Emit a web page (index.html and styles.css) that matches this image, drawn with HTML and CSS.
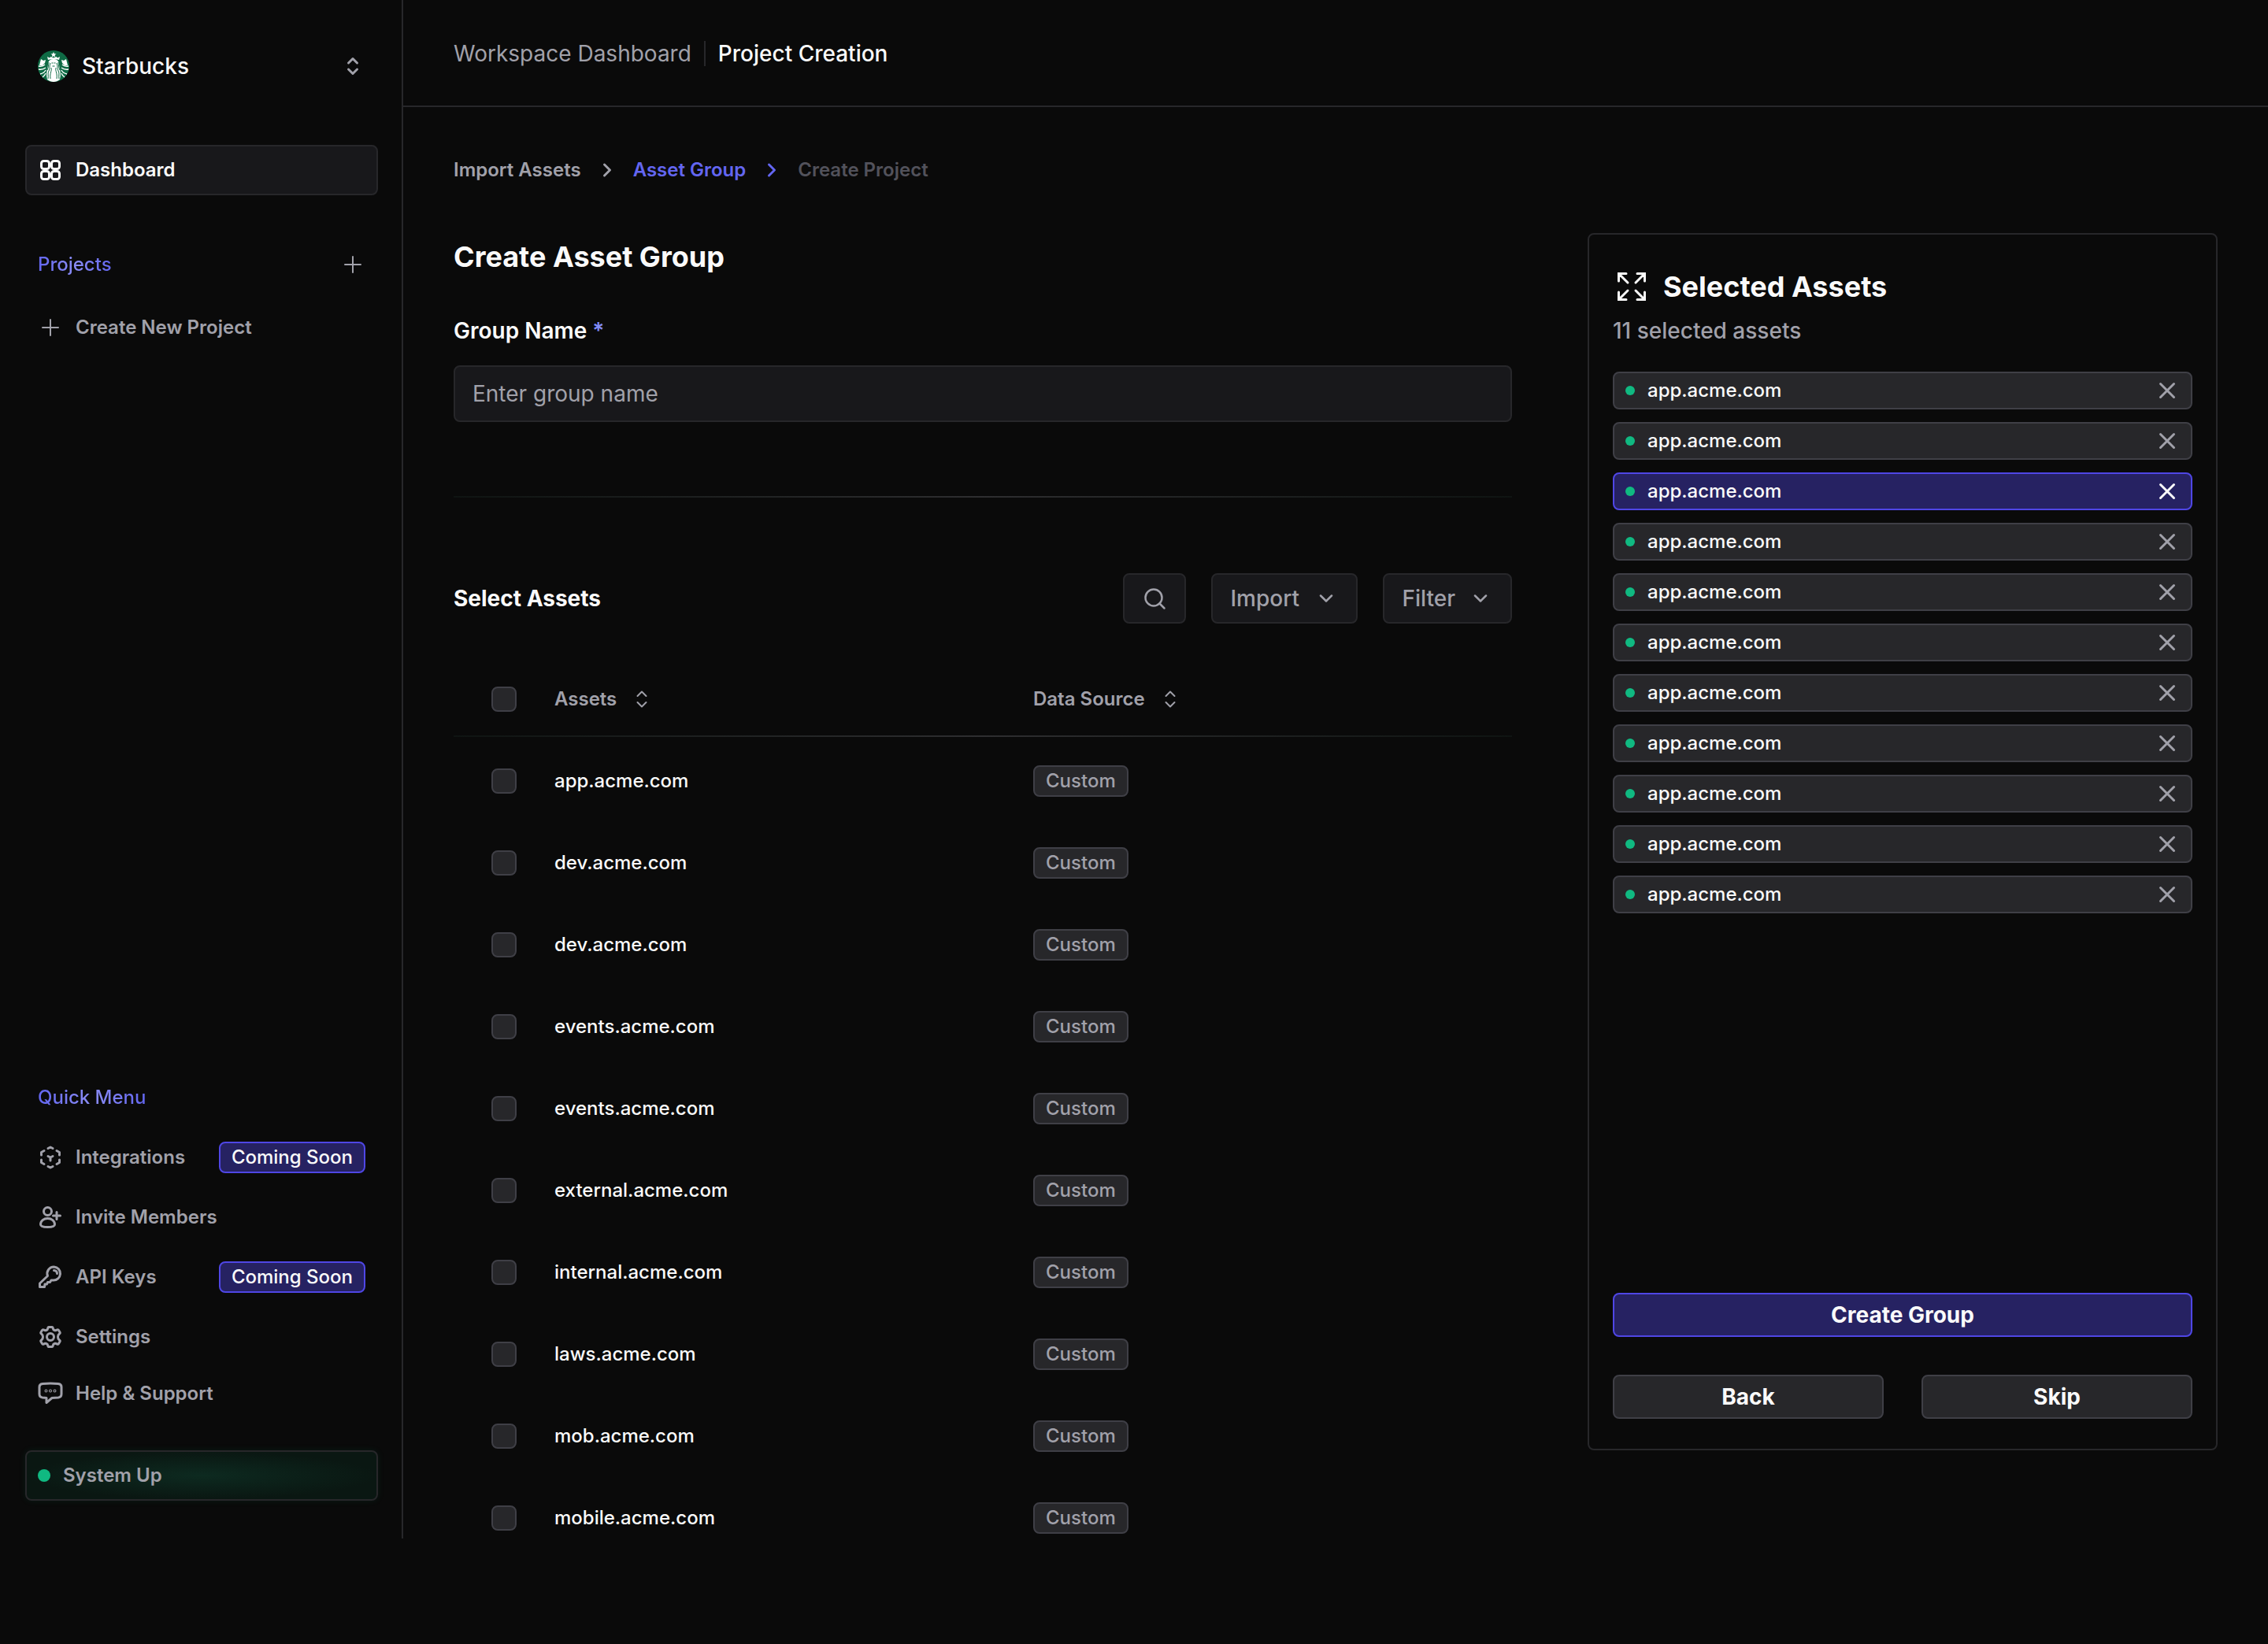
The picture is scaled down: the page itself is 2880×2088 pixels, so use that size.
FILE: index.html
```
<!DOCTYPE html>
<html lang="en">

<head>
    <meta charset="UTF-8">
    <meta name="viewport" content="width=device-width, initial-scale=1.0">
    <title>Project Creation</title>
    <link rel="stylesheet" href="styles.css">
</head>

<body>
    <svg class="sprite" aria-hidden="true">
        <symbol id="icon-sort" viewBox="0 0 32 32">
            <path d="M10.500 12l5.500-5.500 5.500 5.500M10.500 20l5.500 5.500 5.500-5.500" />
        </symbol>
        <symbol id="icon-plus" viewBox="0 0 32 32">
            <path d="M16 6v20M6 16h20" />
        </symbol>
        <symbol id="icon-chevron-right" viewBox="0 0 32 32">
            <path d="M12.500 9l7 7-7 7" />
        </symbol>
        <symbol id="icon-chevron-down" viewBox="0 0 32 32">
            <path d="M9 12.500l7 7 7-7" />
        </symbol>
        <symbol id="icon-close" viewBox="0 0 32 32">
            <path d="M7.500 7.500l17 17M24.500 7.500l-17 17" />
        </symbol>
    </svg>

    <div class="layout">
        <aside class="sidebar">
            <button type="button" class="workspace">
                <svg class="logo" viewBox="0 0 40 40" aria-hidden="true">
                    <circle cx="20" cy="20" r="20" fill="#0f6b45" />
                    <path fill="#fff" d="M20 2l1 2.300 2.500.2-1.900 1.600.6 2.400-2.200-1.300-2.200 1.300.6-2.400-1.900-1.600 2.500-.2zM12 8l3 1.500 1.500-1.500 3.500 1.500L23.500 8 25 9.500 28 8l-1 4q-7-2-14 0zM4 11l3 2 3-1-1 4-3 3-4 0zM36 11l-3 2-3-1 1 4 3 3 4 0zM20 11c5 0 7 3 7 7 1 7 3 11 1 19-5 4-11 4-16 0-2-8 0-12 1-19 0-4 2-7 7-7z" />
                    <path fill="none" stroke="#fff" stroke-width="1.300" d="M1 20q5 1 8-2M1 24q5 1 9-2M3 30q5-1 7-5M6 34q3-2 4-5M39 20q-5 1-8-2M39 24q-5 1-9-2M37 30q-5-1-7-5M34 34q-3-2-4-5" />
                    <path fill="none" stroke="#0f6b45" stroke-width="1" d="M16 16c-2 5 0 6-2 10s0 6-1 10M14 15c-1 4 0 6-2 10M24 16c2 5 0 6 2 10s0 6 1 10M26 15c1 4 0 6 2 10M17 22c1 5-2 6-1 14M23 22c-1 5 2 6 1 14M17.500 16h2M20.500 16h2M18.500 20h3" />
                </svg>
                <span class="workspace-name">Starbucks</span>
                <svg class="icon icon-bold"><use href="#icon-sort" /></svg>
            </button>

            <nav class="nav">
                <a href="#" class="nav-link active">
                    <svg class="icon icon-bold" viewBox="0 0 32 32">
                        <rect x="4.500" y="4.500" width="10" height="10" rx="3" />
                        <rect x="17.500" y="4.500" width="10" height="10" rx="3" />
                        <rect x="4.500" y="17.500" width="10" height="10" rx="3" />
                        <rect x="17.500" y="17.500" width="10" height="10" rx="3" />
                    </svg>
                    Dashboard
                </a>
            </nav>

            <div class="section-title">
                <h2 class="gradient-text">Projects</h2>
                <button type="button" class="icon-btn" aria-label="Add project">
                    <svg class="icon"><use href="#icon-plus" /></svg>
                </button>
            </div>
            <a href="#" class="menu-link">
                <svg class="icon"><use href="#icon-plus" /></svg>
                Create New Project
            </a>

            <nav class="quick-menu">
                <h2 class="gradient-text">Quick Menu</h2>
                <a href="#" class="menu-link">
                    <svg class="icon icon-bold" viewBox="0 0 32 32">
                        <path d="M13 4.500l3-1.500 3 1.500M24 7.500l3.500 2v3.500M27.500 19v3.500l-3.500 2M19 27.500l-3 1.500-3-1.500M8 24.500l-3.500-2V19M4.500 13V9.500l3.500-2M16 20v-4M16 16l-3-1.500M16 16l3-1.500" />
                    </svg>
                    Integrations
                    <span class="badge badge-primary">Coming Soon</span>
                </a>
                <a href="#" class="menu-link">
                    <svg class="icon icon-bold" viewBox="0 0 32 32">
                        <circle cx="12.500" cy="8.500" r="5" />
                        <path d="M12.500 17.500c5 0 9 3 9 7.500 0 2.500-4 3.500-9 3.500s-9-1-9-3.500c0-4.500 4-7.500 9-7.500zM24 9.500v9M19.500 14h9" />
                    </svg>
                    Invite Members
                </a>
                <a href="#" class="menu-link">
                    <svg class="icon icon-bold" viewBox="0 0 32 32">
                        <path d="M20.500 3a8.500 8.500 0 1 1-1 17l-2.500 0-1.500 2.500h-3l-1 2.500H9l-.5 3.500H2.500v-4.500L12.500 14.500A8.500 8.500 0 0 1 20.500 3z" />
                        <path d="M20.500 7.500a4 4 0 0 1 4 4" />
                    </svg>
                    API Keys
                    <span class="badge badge-primary">Coming Soon</span>
                </a>
                <a href="#" class="menu-link">
                    <svg class="icon icon-bold" viewBox="0 0 32 32">
                        <path d="M14 3.500h4q1 0 1.200 1.500 .3 2 2 2.500t3-.5q1.500-.8 2.300.5l1.500 2.500q.7 1.200-.8 2.200-1.700 1.300-1.700 3.800t1.700 3.800q1.500 1 .8 2.200l-1.500 2.500q-.8 1.300-2.300.5-1.300-1-3-.5t-2 2.500q-.2 1.500-1.200 1.500h-4q-1 0-1.200-1.500-.3-2-2-2.500t-3 .5q-1.500.8-2.300-.5L4 22q-.7-1.200.8-2.200 1.700-1.300 1.700-3.800t-1.700-3.800Q3.300 11.200 4 10l1.500-2.500q.8-1.300 2.300-.5 1.300 1 3 .5t2-2.500Q13 3.500 14 3.500z" />
                        <circle cx="16" cy="16" r="4.500" />
                    </svg>
                    Settings
                </a>
                <a href="#" class="menu-link">
                    <svg class="icon icon-bold" viewBox="0 0 32 32">
                        <path d="M6 3.500q10-1 20 0 4 .5 4 4v9q0 4-4 4.500l-8 .5-7 6v-6l-5-.5q-4-.5-4-4.500v-9q0-3.500 4-4z" />
                        <circle cx="10.500" cy="12.500" r="0.500" />
                        <circle cx="16" cy="12.500" r="0.500" />
                        <circle cx="21.500" cy="12.500" r="0.500" />
                    </svg>
                    Help &amp; Support
                </a>
            </nav>

            <div class="status">
                <span class="status-dot"></span>
                System Up
            </div>
        </aside>

        <div class="page">
            <header class="topbar">
                <a href="#">Workspace Dashboard</a>
                <span class="topbar-current">Project Creation</span>
            </header>

            <div class="content">
                <nav class="breadcrumb" aria-label="Steps">
                    <a href="#">Import Assets</a>
                    <svg class="icon"><use href="#icon-chevron-right" /></svg>
                    <a href="#" class="current">Asset Group</a>
                    <svg class="icon current"><use href="#icon-chevron-right" /></svg>
                    <span class="disabled">Create Project</span>
                </nav>

                <div class="columns">
                    <main class="main">
                        <h1>Create Asset Group</h1>

                        <div class="form-group">
                            <label for="group-name">Group Name <span class="required">*</span></label>
                            <input type="text" id="group-name" name="group-name" placeholder="Enter group name">
                        </div>

                        <div class="divider"></div>

                        <div class="toolbar">
                            <h2>Select Assets</h2>
                            <button type="button" class="tool-btn" aria-label="Search">
                                <svg class="icon" viewBox="0 0 32 32">
                                    <circle cx="15" cy="15" r="10.500" />
                                    <path d="M22.500 22.500l6 6" />
                                </svg>
                            </button>
                            <button type="button" class="tool-btn tool-btn-wide">Import <svg class="icon"><use href="#icon-chevron-down" /></svg></button>
                            <button type="button" class="tool-btn">Filter <svg class="icon"><use href="#icon-chevron-down" /></svg></button>
                        </div>

                        <table class="assets">
                            <thead>
                                <tr>
                                    <th class="check"><input type="checkbox" aria-label="Select all"></th>
                                    <th><span class="sortable">Assets <svg class="icon"><use href="#icon-sort" /></svg></span></th>
                                    <th><span class="sortable">Data Source <svg class="icon"><use href="#icon-sort" /></svg></span></th>
                                </tr>
                            </thead>
                            <tbody>
                                <tr>
                                    <td class="check"><input type="checkbox" id="asset-1"></td>
                                    <td><label for="asset-1">app.acme.com</label></td>
                                    <td><span class="badge">Custom</span></td>
                                </tr>
                                <tr>
                                    <td class="check"><input type="checkbox" id="asset-2"></td>
                                    <td><label for="asset-2">dev.acme.com</label></td>
                                    <td><span class="badge">Custom</span></td>
                                </tr>
                                <tr>
                                    <td class="check"><input type="checkbox" id="asset-3"></td>
                                    <td><label for="asset-3">dev.acme.com</label></td>
                                    <td><span class="badge">Custom</span></td>
                                </tr>
                                <tr>
                                    <td class="check"><input type="checkbox" id="asset-4"></td>
                                    <td><label for="asset-4">events.acme.com</label></td>
                                    <td><span class="badge">Custom</span></td>
                                </tr>
                                <tr>
                                    <td class="check"><input type="checkbox" id="asset-5"></td>
                                    <td><label for="asset-5">events.acme.com</label></td>
                                    <td><span class="badge">Custom</span></td>
                                </tr>
                                <tr>
                                    <td class="check"><input type="checkbox" id="asset-6"></td>
                                    <td><label for="asset-6">external.acme.com</label></td>
                                    <td><span class="badge">Custom</span></td>
                                </tr>
                                <tr>
                                    <td class="check"><input type="checkbox" id="asset-7"></td>
                                    <td><label for="asset-7">internal.acme.com</label></td>
                                    <td><span class="badge">Custom</span></td>
                                </tr>
                                <tr>
                                    <td class="check"><input type="checkbox" id="asset-8"></td>
                                    <td><label for="asset-8">laws.acme.com</label></td>
                                    <td><span class="badge">Custom</span></td>
                                </tr>
                                <tr>
                                    <td class="check"><input type="checkbox" id="asset-9"></td>
                                    <td><label for="asset-9">mob.acme.com</label></td>
                                    <td><span class="badge">Custom</span></td>
                                </tr>
                                <tr>
                                    <td class="check"><input type="checkbox" id="asset-10"></td>
                                    <td><label for="asset-10">mobile.acme.com</label></td>
                                    <td><span class="badge">Custom</span></td>
                                </tr>
                            </tbody>
                        </table>
                    </main>

                    <section class="panel">
                        <div class="panel-title">
                            <svg class="icon-expand" viewBox="0 0 48 48" aria-hidden="true">
                                <path d="M7.500 17v-9.500h9.500M8 8l11 11M31 7.500h9.500V17M40 8L29 19M7.500 31v9.500h9.500M8 40l11-11M31 40.500h9.500V31M40 40L29 29" />
                            </svg>
                            <h2>Selected Assets</h2>
                        </div>
                        <p>11 selected assets</p>

                        <ul class="selected">
                            <li>app.acme.com <button type="button" class="icon-btn" aria-label="Remove"><svg class="icon icon-bold"><use href="#icon-close" /></svg></button></li>
                            <li>app.acme.com <button type="button" class="icon-btn" aria-label="Remove"><svg class="icon icon-bold"><use href="#icon-close" /></svg></button></li>
                            <li class="highlight">app.acme.com <button type="button" class="icon-btn" aria-label="Remove"><svg class="icon icon-bold"><use href="#icon-close" /></svg></button></li>
                            <li>app.acme.com <button type="button" class="icon-btn" aria-label="Remove"><svg class="icon icon-bold"><use href="#icon-close" /></svg></button></li>
                            <li>app.acme.com <button type="button" class="icon-btn" aria-label="Remove"><svg class="icon icon-bold"><use href="#icon-close" /></svg></button></li>
                            <li>app.acme.com <button type="button" class="icon-btn" aria-label="Remove"><svg class="icon icon-bold"><use href="#icon-close" /></svg></button></li>
                            <li>app.acme.com <button type="button" class="icon-btn" aria-label="Remove"><svg class="icon icon-bold"><use href="#icon-close" /></svg></button></li>
                            <li>app.acme.com <button type="button" class="icon-btn" aria-label="Remove"><svg class="icon icon-bold"><use href="#icon-close" /></svg></button></li>
                            <li>app.acme.com <button type="button" class="icon-btn" aria-label="Remove"><svg class="icon icon-bold"><use href="#icon-close" /></svg></button></li>
                            <li>app.acme.com <button type="button" class="icon-btn" aria-label="Remove"><svg class="icon icon-bold"><use href="#icon-close" /></svg></button></li>
                            <li>app.acme.com <button type="button" class="icon-btn" aria-label="Remove"><svg class="icon icon-bold"><use href="#icon-close" /></svg></button></li>
                        </ul>

                        <div class="actions">
                            <button type="submit" class="btn btn-primary">Create Group</button>
                            <button type="button" class="btn">Back</button>
                            <button type="button" class="btn">Skip</button>
                        </div>
                    </section>
                </div>
            </div>
        </div>
    </div>
</body>

</html>
```
FILE: styles.css
```
* {
    box-sizing: border-box;
}

body {
    margin: 0;
    background-color: #0a0a0a;
    color: #fafafa;
    font-family: Inter, "Liberation Sans", sans-serif;
    font-size: 24px;
    line-height: 32px;
}

h1,
h2,
p,
ul {
    margin: 0;
    padding: 0;
}

a {
    color: inherit;
    text-decoration: none;
}

button,
input {
    font: inherit;
    color: inherit;
}

button {
    padding: 0;
    border: none;
    background: none;
    cursor: pointer;
}

.sprite {
    display: none;
}

.icon {
    width: 32px;
    height: 32px;
    flex: none;
    fill: none;
    stroke: currentColor;
    stroke-width: 2;
    stroke-linecap: round;
    stroke-linejoin: round;
}

.icon-bold {
    stroke-width: 3;
}

.icon-btn {
    display: flex;
    color: #a1a1aa;
}

.layout {
    display: flex;
    align-items: flex-start;
}

/* Sidebar */
.sidebar {
    display: flex;
    flex-direction: column;
    flex: none;
    width: 512px;
    min-height: calc(100vh - 134px);
    padding: 64px 30px 48px 32px;
    border-right: 2px solid #27272a;
    color: #a1a1aa;
}

.workspace {
    display: flex;
    align-items: center;
    height: 40px;
    gap: 16px;
    padding: 0 16px;
    color: #a1a1aa;
    font-size: 28px;
}

.logo {
    width: 40px;
    height: 40px;
}

.workspace-name {
    flex: 1;
    text-align: left;
    color: #fafafa;
    font-weight: 500;
}

.nav {
    margin-top: 80px;
}

.nav-link {
    display: flex;
    align-items: center;
    gap: 16px;
    height: 64px;
    padding: 0 14px;
    border: 2px solid #27272a;
    border-radius: 8px;
    background-color: #18181b;
    color: #fafafa;
    font-weight: 600;
}

.section-title {
    display: flex;
    align-items: center;
    justify-content: space-between;
    margin: 72px 16px 48px;
}

.gradient-text {
    align-self: flex-start;
    background: linear-gradient(90deg, #6366f1, #8b8df5, #6366f1);
    background-clip: text;
    -webkit-background-clip: text;
    color: transparent;
    font-size: 24px;
    font-weight: 500;
}

.menu-link {
    display: flex;
    align-items: center;
    gap: 16px;
    font-weight: 600;
}

.sidebar > .menu-link {
    margin: 0 16px;
}

.quick-menu {
    display: flex;
    flex-direction: column;
    gap: 40px;
    margin: auto 16px 56px;
}

.badge {
    display: inline-block;
    padding: 2px 14px;
    border: 2px solid #3f3f46;
    border-radius: 8px;
    background-color: #27272a;
    color: #a1a1aa;
    font-weight: 500;
}

.badge-primary {
    margin-left: auto;
    border-color: #4f46e5;
    background-color: #262262;
    color: #fafafa;
}

.status {
    display: flex;
    align-items: center;
    gap: 16px;
    height: 64px;
    padding: 0 14px;
    border: 2px solid #27272a;
    border-radius: 8px;
    background: radial-gradient(closest-side, #0d2a20, #0a1712);
    box-shadow: 0 0 8px rgba(16, 185, 129, 0.1);
    font-weight: 600;
}

.status-dot {
    width: 16px;
    height: 16px;
    border-radius: 50%;
    background-color: #10b981;
}

/* Page */
.page {
    flex: 1;
    min-width: 0;
}

.topbar {
    display: flex;
    align-items: center;
    gap: 16px;
    height: 136px;
    padding: 2px 64px 0;
    border-bottom: 2px solid #27272a;
    color: #a1a1aa;
    font-size: 28px;
}

.topbar-current {
    padding-left: 16px;
    border-left: 2px solid #27272a;
    color: #fafafa;
    font-weight: 500;
}

.content {
    padding: 64px;
}

.breadcrumb {
    display: flex;
    align-items: center;
    gap: 17px;
    color: #a1a1aa;
    font-weight: 600;
}

.breadcrumb .icon {
    stroke-width: 3;
}

.breadcrumb .current {
    color: #6366f1;
}

.breadcrumb .disabled {
    color: #52525b;
}

.columns {
    display: flex;
    align-items: flex-start;
    gap: 96px;
    margin-top: 64px;
}

.main {
    flex: 1;
    min-width: 0;
}

h1,
.panel-title h2 {
    font-size: 36px;
    line-height: 48px;
    font-weight: 700;
}

.main h1 {
    margin-top: 6px;
}

.form-group {
    margin-top: 54px;
}

.form-group label {
    display: block;
    margin-bottom: 28px;
    font-size: 28px;
    font-weight: 600;
}

.required {
    color: #818cf8;
}

.form-group input {
    display: block;
    width: 100%;
    height: 72px;
    padding: 0 22px;
    border: 2px solid #27272a;
    border-radius: 8px;
    background-color: #18181b;
    font-size: 28px;
}

.form-group input::placeholder {
    color: #a1a1aa;
}

.divider {
    height: 2px;
    margin: 94px 0 96px;
    background: linear-gradient(90deg, #0f1412, #2e2e30, #0f1412);
}

.toolbar {
    display: flex;
    align-items: center;
    gap: 32px;
}

.toolbar h2 {
    flex: 1;
    font-size: 28px;
    font-weight: 700;
}

.tool-btn {
    display: flex;
    align-items: center;
    justify-content: space-between;
    gap: 16px;
    height: 64px;
    padding: 0 22px;
    border: 2px solid #27272a;
    border-radius: 8px;
    background-color: #18181b;
    color: #a1a1aa;
    font-size: 28px;
    font-weight: 500;
}

.tool-btn-wide {
    min-width: 186px;
}

.tool-btn .icon {
    stroke-width: 2.500;
}

.assets {
    width: 100%;
    margin-top: 48px;
    border-collapse: collapse;
    table-layout: fixed;
}

.assets th,
.assets td {
    padding: 0;
    text-align: left;
}

.assets thead tr {
    height: 96px;
    background: linear-gradient(90deg, #0f1412, #2e2e30, #0f1412) bottom / 100% 2px no-repeat;
    color: #a1a1aa;
}

.assets th {
    font-weight: 600;
}

.assets tbody::before {
    content: "";
    display: table-row;
    height: 4px;
}

.assets tbody tr {
    height: 104px;
    font-weight: 500;
}

.assets .check {
    width: 128px;
    padding-left: 48px;
}

.assets input {
    display: block;
    appearance: none;
    width: 32px;
    height: 32px;
    margin: 0;
    border: 2px solid #3f3f46;
    border-radius: 8px;
    background-color: #27272a;
}

.sortable {
    display: flex;
    align-items: center;
    gap: 16px;
}

/* Selected assets */
.panel {
    display: flex;
    flex-direction: column;
    flex: none;
    width: 800px;
    min-height: calc(100vh - 542px);
    padding: 42px 30px 38px;
    border: 2px solid #27272a;
    border-radius: 8px;
}

.panel-title {
    display: flex;
    align-items: center;
    gap: 16px;
}

.icon-expand {
    width: 48px;
    height: 48px;
    fill: none;
    stroke: currentColor;
    stroke-width: 3;
    stroke-linecap: round;
}

.panel p {
    margin-top: 16px;
    color: #a1a1aa;
    font-size: 28px;
    font-weight: 500;
}

.selected {
    display: flex;
    flex-direction: column;
    gap: 16px;
    margin: 36px 0;
    list-style: none;
}

.selected li {
    display: flex;
    align-items: center;
    height: 48px;
    padding: 0 14px;
    border: 2px solid #3f3f46;
    border-radius: 8px;
    background-color: #27272a;
    font-weight: 500;
}

.selected li::before {
    content: "";
    width: 12px;
    height: 12px;
    margin-right: 16px;
    border-radius: 50%;
    background-color: #10b981;
}

.selected .icon-btn {
    margin-left: auto;
}

.selected .highlight,
.actions .btn-primary {
    border-color: #4f46e5;
    background-color: #262262;
}

.highlight .icon-btn {
    color: #fafafa;
}

.actions {
    display: grid;
    grid-template-columns: 1fr 1fr;
    gap: 48px;
    margin-top: auto;
}

.btn {
    height: 56px;
    border: 2px solid #3f3f46;
    border-radius: 8px;
    background-color: #27272a;
    font-size: 28px;
    font-weight: 700;
}

.btn-primary {
    grid-column: span 2;
}
```
